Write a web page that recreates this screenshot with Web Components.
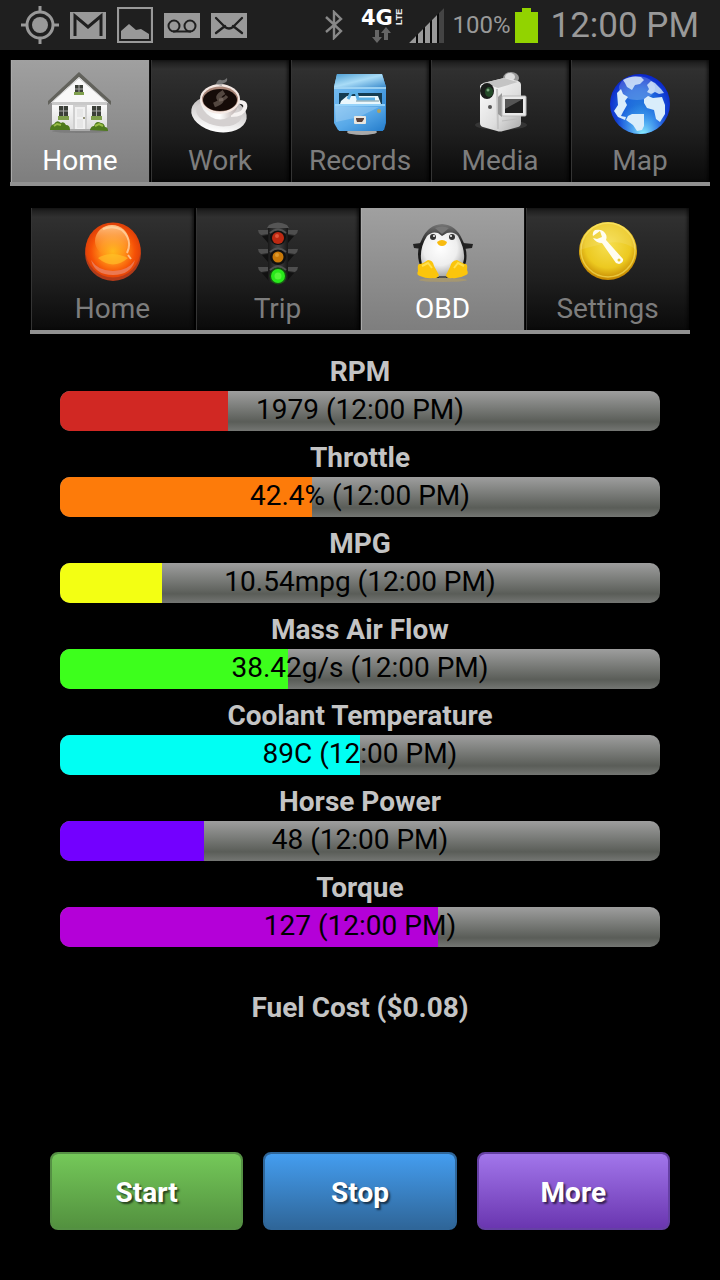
<!DOCTYPE html>
<html lang="en">
<head>
<meta charset="utf-8">
<meta name="viewport" content="width=device-width, initial-scale=1">
<title>OBD Dashboard</title>
<style>
  html, body { margin: 0; background: #000; }
  body { font-family: Roboto, "Noto Sans", sans-serif; font-size: 28px; color: #c4c4c4; }
</style>
</head>
<body>
<dash-app></dash-app>

<template id="t-app">
  <style>
    :host { display: flex; flex-direction: column; min-height: 100vh; }
    main { flex: 1; display: flex; flex-direction: column; padding: 10px 10px 50px; }
    .sub { margin: 22px 20px 0; }
    .gauges { display: flex; flex-direction: column; margin: 18px 50px 0; }
    .cost { margin: 34px 0 0; line-height: 40px; text-align: center; font-weight: 700; }
    .actions { display: flex; gap: 20px; margin: auto 40px 0; padding-top: 40px; }
  </style>
  <status-bar></status-bar>
  <main>
    <tab-strip label="Sections">
      <tab-item icon="house" selected>Home</tab-item>
      <tab-item icon="coffee">Work</tab-item>
      <tab-item icon="cabinet">Records</tab-item>
      <tab-item icon="camera">Media</tab-item>
      <tab-item icon="globe">Map</tab-item>
    </tab-strip>
    <tab-strip class="sub" label="Vehicle">
      <tab-item icon="orb">Home</tab-item>
      <tab-item icon="lights">Trip</tab-item>
      <tab-item icon="penguin" selected>OBD</tab-item>
      <tab-item icon="wrench">Settings</tab-item>
    </tab-strip>
    <section class="gauges">
      <gauge-bar label="RPM" percent="28" color="#d12823">1979 (12:00 PM)</gauge-bar>
      <gauge-bar label="Throttle" percent="42" color="#fd7b0a">42.4% (12:00 PM)</gauge-bar>
      <gauge-bar label="MPG" percent="17" color="#f3ff13">10.54mpg (12:00 PM)</gauge-bar>
      <gauge-bar label="Mass Air Flow" percent="38" color="#3dff1c">38.42g/s (12:00 PM)</gauge-bar>
      <gauge-bar label="Coolant Temperature" percent="50" color="#00fff3">89C (12:00 PM)</gauge-bar>
      <gauge-bar label="Horse Power" percent="24" color="#7300ff">48 (12:00 PM)</gauge-bar>
      <gauge-bar label="Torque" percent="63" color="#b400d8">127 (12:00 PM)</gauge-bar>
    </section>
    <p class="cost">Fuel Cost ($0.08)</p>
    <div class="actions">
      <action-button tone="green">Start</action-button>
      <action-button tone="blue">Stop</action-button>
      <action-button tone="purple">More</action-button>
    </div>
  </main>
</template>

<template id="t-status">
  <style>
    :host { display: flex; align-items: center; height: 50px; padding: 0 21px; background: #1f1f1f; color: #999; }
    .notes { display: flex; align-items: center; gap: 11px; }
    .system { display: flex; align-items: center; margin-left: auto; }
    svg { display: block; flex: none; }
    .net { margin: 0 6px 0 16px; }
    .pct { font-size: 24px; margin: 0 4px 0 8px; }
    .clock { font-size: 35px; margin-left: 13px; }
  </style>
  <div class="notes">
    <svg width="38" height="38" viewBox="0 0 38 38" fill="none" stroke="#999"><circle cx="19" cy="19" r="13" stroke-width="3"/><circle cx="19" cy="19" r="8" fill="#999" stroke="none"/><path d="M19 0v6M19 32v6M0 19h6M32 19h6" stroke-width="3"/></svg>
    <svg width="36" height="27" viewBox="0 0 36 27"><path fill="#999" d="M0 0h36v27H0z"/><path d="M5 24V4l13 11L31 4v20" fill="none" stroke="#1f1f1f" stroke-width="3"/></svg>
    <svg width="36" height="36" viewBox="0 0 36 36"><path d="M1 1h34v34H1z" fill="none" stroke="#999" stroke-width="2.2"/><path d="M4 32V24l8-7 7 6 5-1 8 5v5z" fill="#999"/></svg>
    <svg width="36" height="25" viewBox="0 0 36 25"><path fill="#999" d="M0 0h36v25H0z"/><g fill="none" stroke="#1f1f1f" stroke-width="2"><circle cx="10" cy="13" r="5.5"/><circle cx="26" cy="13" r="5.5"/><path d="M9 18.5h18"/></g></svg>
    <svg width="36" height="25" viewBox="0 0 36 25"><path fill="#999" d="M0 0h36v25H0z"/><path d="M5 5l9 9q4 3 8 0l9-9M5 20l9-7M31 20l-9-7" fill="none" stroke="#1f1f1f" stroke-width="2.3" stroke-linecap="round"/></svg>
  </div>
  <div class="system">
    <svg width="18" height="30" viewBox="0 0 18 30"><path d="M1 7l15 14-7 7V2l7 7L1 22" fill="none" stroke="#888" stroke-width="2.4"/></svg>
    <svg class="net" width="44" height="36" viewBox="0 0 44 36">
      <text x="2" y="18" font-family="DejaVu Sans" font-weight="700" font-size="21" fill="#fff">4G</text>
      <text transform="translate(43 18) rotate(-90)" font-family="Liberation Sans" font-weight="700" font-size="9" fill="#eee">LTE</text>
      <path d="M16 23h4v7h3l-5 6-5-6h3zM25 33v-7h-3l5-6 5 6h-3v7z" fill="#666"/>
    </svg>
    <svg width="35" height="35" viewBox="0 0 35 35"><path d="M0 35L35 0v35z" fill="#0a0a0a"/><path d="M0 35l7-7v7zM9 26l5-5v14H9zM16 19l5-5v21h-5zM23 12l5-5v28h-5z" fill="#999"/><path d="M30 5l5-5v35h-5z" fill="#444"/></svg>
    <span class="pct">100%</span>
    <svg width="23" height="35" viewBox="0 0 23 35"><path d="M7 0h9v4h7v31H0V4h7z" fill="#92d300"/></svg>
    <time class="clock">12:00 PM</time>
  </div>
</template>

<template id="t-strip">
  <style>
    :host { display: block; }
    div { display: flex; border-bottom: 4px solid #919191; }
  </style>
  <div role="tablist"><slot></slot></div>
</template>

<template id="t-tab">
  <style>
    :host { display: flex; flex: 1; min-width: 0; }
    button {
      flex: 1; min-width: 0; height: 122px; padding: 11px 0 0; margin: 0; border: 0; border-radius: 0;
      display: flex; flex-direction: column; align-items: center; gap: 7px;
      font: inherit; line-height: 33px; color: #7d7d7d;
      background: linear-gradient(#191919, #303030 9px, #1e1e1e 60%, #0a0a0a);
      box-shadow: inset 1px 0 #000, inset 2px 0 #343434, inset -1px 0 #000, inset -3px 0 3px #0008;
    }
    button[aria-selected="true"] {
      color: #fff; background: linear-gradient(#a0a0a0, #7e7e7e);
      box-shadow: inset 1px 0 #222, inset 2px 0 #aaa, inset -1px 0 #111;
    }
  </style>
  <button type="button" role="tab"><tab-icon></tab-icon><span><slot></slot></span></button>
</template>

<template id="t-gauge">
  <style>
    :host { display: block; }
    .name { line-height: 40px; text-align: center; font-weight: 700; }
    .track {
      display: grid; height: 40px; margin: -1px 0 7px; border-radius: 10px; overflow: hidden;
      background: linear-gradient(#9e9e9e, #7b7d7a 40%, #5a5d58 77%, #747673);
    }
    .track > * { grid-area: 1 / 1; }
    .value { line-height: 37px; text-align: center; color: #000; }
  </style>
  <div class="name" id="name"></div>
  <div class="track" role="meter" aria-labelledby="name" aria-valuemin="0" aria-valuemax="100">
    <div class="fill"></div>
    <div class="value"><slot></slot></div>
  </div>
</template>

<template id="t-button">
  <style>
    :host { display: flex; flex: 1 1 0; min-width: 0; --top: #74c859; --bottom: #53913f; --edge: #559044; }
    :host([tone="blue"]) { --top: #449def; --bottom: #2f6699; --edge: #2f6699; }
    :host([tone="purple"]) { --top: #a276eb; --bottom: #6a36b0; --edge: #6540a4; }
    button {
      flex: 1; min-width: 0; height: 78px; padding: 4px 0 0; border: 2px solid var(--edge); border-radius: 8px;
      background: linear-gradient(var(--top), var(--bottom)) padding-box, var(--edge);
      font: inherit; font-weight: 700; line-height: 40px; color: #fff; text-shadow: 2px 2px 2px #0009;
    }
  </style>
  <button type="button"><slot></slot></button>
</template>

<script>
const ICONS = {
  house: `
    <defs><linearGradient id="w" x2="0" y2="1"><stop stop-color="#fff"/><stop offset="1" stop-color="#dcdcdc"/></linearGradient></defs>
    <ellipse cx="32" cy="60" rx="28" ry="2" fill="#6666"/>
    <path d="M4 30h55v28H4z" fill="url(#w)"/>
    <path d="M31 4l28 28H3z" fill="#f8f8f8"/>
    <path d="M4 31h55v3H4z" fill="#c9c9c9"/>
    <path d="M0 34v-4L31 1l32 29v4L31 6z" fill="#62625c"/>
    <path d="M3 32L31 7l29 25" fill="none" stroke="#ccc"/>
    <path d="M25 34h14v25H25z" fill="#d0d0d0"/><path d="M27 36h10v23H27z" fill="#f1f1f1"/>
    <path d="M29 38h6v8h-6zM29 48h6v9h-6z" fill="#e6e6e6"/><circle cx="36" cy="47" r="1" fill="#775"/>
    <g fill="#3c4039"><path d="M11 35h9v12h-9zM44 35h9v12h-9zM27 14h8v9h-8z"/></g>
    <path d="M15.500 35v12M11 40h9M48.500 35v12M44 40h9M31 14v9M27 18h8" stroke="#aaa"/>
    <path d="M10 45h11v4H10zM43 45h11v4H43zM26 21h10v3H26z" fill="#7f9f4d"/>
    <path d="M2 59q0-5 4-6 3-5 7-1 3-2 5 2 4 0 4 5zM42 59q1-4 4-4 2-6 7-3 3 0 4 4 3 0 3 4z" fill="#4e7a1c"/>
    <path d="M6 55l3-2 4 1M47 55l4-2 4 2" stroke="#98bd45" stroke-width="2" fill="none"/>
    <path d="M22 58h20v2H22z" fill="#aaa"/>`,
  coffee: `
    <defs><linearGradient id="s" x2="0" y2="1"><stop stop-color="#b5b0b0"/><stop offset="1" stop-color="#fff"/></linearGradient>
    <linearGradient id="c"><stop stop-color="#eee"/><stop offset=".5" stop-color="#fff"/><stop offset="1" stop-color="#b5a7a5"/></linearGradient></defs>
    <ellipse cx="31" cy="43" rx="28" ry="18" transform="rotate(10 31 43)" fill="url(#s)"/>
    <ellipse cx="31" cy="42" rx="23" ry="13" transform="rotate(10 31 42)" fill="#d4d0d0"/>
    <path d="M48 31q11-1 9 6-2 7-14 7" fill="none" stroke="#f6f2f1" stroke-width="4"/>
    <path d="M12 28q1 12 11 18 9 5 18 0 10-6 10-18z" fill="url(#c)"/>
    <ellipse cx="32" cy="28" rx="20" ry="15" fill="#f5e9e4"/><ellipse cx="32" cy="28" rx="18" ry="12.500" fill="#a98678"/>
    <ellipse cx="32" cy="29" rx="17" ry="11" fill="#150b08"/>
    <path d="M36 21q-8 5-4 7t-6 6" stroke="#8a7b7288" stroke-width="5" fill="none"/><path d="M39 25q-3 4-8 4" stroke="#8a7b7288" stroke-width="3" fill="none"/>
    <path d="M28 13q2-5 5-4t6-2q1 4-3 5t-1 4z" fill="#999a"/>`,
  cabinet: `
    <defs><linearGradient id="b" x2="1" y2="1"><stop stop-color="#7cc0f2"/><stop offset=".5" stop-color="#57a8e8"/><stop offset="1" stop-color="#247ccb"/></linearGradient>
    <linearGradient id="t" x2="1" y2="1"><stop stop-color="#4c9ed4"/><stop offset=".5" stop-color="#a9dcf7"/><stop offset="1" stop-color="#3c8ccd"/></linearGradient></defs>
    <ellipse cx="34" cy="61" rx="15" ry="3" fill="#aaa"/>
    <path d="M6 16l3-13h45l4 13v36l-2 7H10l-4-7z" fill="url(#b)"/>
    <path d="M6 16L9 3h45l4 13z" fill="url(#t)"/><path d="M6 17h52" stroke="#b0def6" stroke-width="1.500"/>
    <path d="M11 22h43v11H11z" fill="#153c52"/>
    <path d="M13 30l6-5h31l3 8H12z" fill="#eaf7fc"/><path d="M20 28l3-6 5-1 2 7h17" stroke="#5cb1e7" stroke-width="3" fill="none"/>
    <path d="M28 30h23" stroke="#77959f"/>
    <path d="M7 33h50v19l-2 8H11l-4-8z" fill="url(#b)"/><path d="M7 34h50" stroke="#a5dcfd" stroke-width="1.500"/>
    <path d="M7 35l44 1-20 10-23 5z" fill="#fff3"/>
    <rect x="26" y="45" width="12" height="8" rx="1" fill="#e9e6df"/><path d="M28 47h8v1l-2 3h-5l-1-3z" fill="#59403a"/>
    <circle cx="51" cy="40" r="2" fill="#b2a15a"/>`,
  camera: `
    <defs><linearGradient id="m" x2="1" y2="1"><stop stop-color="#fff"/><stop offset=".6" stop-color="#dedede"/><stop offset="1" stop-color="#aaa"/></linearGradient></defs>
    <ellipse cx="33" cy="54" rx="26" ry="5" fill="#5556"/>
    <ellipse cx="43" cy="7" rx="8" ry="6" fill="#999"/><ellipse cx="42" cy="6" rx="5" ry="4" fill="#ddd"/>
    <path d="M12 16q0-3 4-4l20-5 14 3q3 1 3 4v38q0 3-3 4l-15 4q-3 1-6 0l-14-4q-3-1-3-4z" fill="url(#m)"/>
    <path d="M15 12l21-5 14 4-20 6z" fill="#c4c4c4"/>
    <path d="M29 18l1 40" stroke="#c4c4c4" stroke-width="2"/>
    <ellipse cx="19" cy="20" rx="7" ry="8" fill="#191c1a"/><ellipse cx="21" cy="21" rx="4" ry="5" fill="#234a28"/><circle cx="20" cy="19" r="1.500" fill="#77a27b"/>
    <circle cx="22" cy="36" r="2" fill="#555"/><path d="M34 50l15-2" stroke="#bbb"/>
    <path d="M30 26l4-4v24l-4-3z" fill="#999"/>
    <rect x="34" y="25" width="24" height="20" rx="1" fill="#e9e9e9" stroke="#bbb"/><path d="M37 28h18v14H37z" fill="#202020"/><path d="M37 28h18L37 38z" fill="#555"/>`,
  globe: `
    <defs><radialGradient id="g" cx=".5" cy=".55" r=".55"><stop stop-color="#2379dc"/><stop offset=".55" stop-color="#1c64dd"/><stop offset="1" stop-color="#0a24ca"/></radialGradient>
    <radialGradient id="h" cx=".55" cy="1" r=".5"><stop stop-color="#8cf0ff"/><stop offset="1" stop-color="#49b8ff00"/></radialGradient></defs>
    <circle cx="32" cy="33" r="30" fill="url(#g)"/><circle cx="32" cy="33" r="30" fill="url(#h)"/>
    <g fill="#d9edfb"><path d="M15 9q8-5 18-3l3 3-4 4-5 1-3 5-5-3-2-4z" opacity=".8"/>
    <path d="M9 22l4-4 2 5 5 3-3 4 2 4-4 7-2 4 5 1-1 3-7-3-4-6 4-6z"/>
    <path d="M20 45l4-2h12v12l-2 4-5 1-4-6-7-5z"/>
    <path d="M39 14l4-4 4 2 6 6 3 4-5 1-4-2-4 2-4-2 2-3z" opacity=".8"/>
    <path d="M36 28l4-3 5 2 9-1 3 8v9l-5 8-4-3-2-9-7-2-3-5z"/></g>
    <ellipse cx="29" cy="17" rx="18" ry="12" fill="#fff3"/>`,
  orb: `
    <defs><radialGradient id="o" cx=".5" cy=".52" r=".5"><stop stop-color="#ffbd19"/><stop offset=".45" stop-color="#ff8b17"/><stop offset=".8" stop-color="#f55006"/><stop offset="1" stop-color="#e04208"/></radialGradient>
    <linearGradient id="p" x2="0" y2="1"><stop stop-color="#ffc589"/><stop offset="1" stop-color="#ff9e1600"/></linearGradient></defs>
    <circle cx="32" cy="34" r="28" fill="#b23b19"/><circle cx="32" cy="31" r="27.500" fill="url(#o)"/>
    <path d="M10 41q7 11 22 11t22-11q-4 15-22 15T10 41z" fill="#eb7952"/>
    <ellipse cx="31" cy="22" rx="17" ry="16" fill="url(#p)"/><path d="M17 39q13-8 30 0-15 13-30 0z" fill="#ffc52a99"/>
    <path d="M22 10q10-4 19 1M41 11q11 10 5 23M47 36l3 4" stroke="#ffd2a0cc" stroke-width="2" fill="none"/>`,
  lights: `
    <defs><linearGradient id="k"><stop stop-color="#191919"/><stop offset=".5" stop-color="#464646"/><stop offset="1" stop-color="#171717"/></linearGradient></defs>
    <path d="M22 8q10-7 20 0v54q-10 4-20 0z" fill="url(#k)"/><path d="M23 6q9-5 18 0l2 3H21z" fill="#555"/>
    <g fill="#4f4f4f"><path d="M12 11h10v4l-7 1q-3-2-3-5zM52 11H42v4l7 1q3-2 3-5zM12 30h10v4l-7 1q-3-2-3-5zM52 30H42v4l7 1q3-2 3-5zM12 48h10v4l-7 1q-3-2-3-5zM52 48H42v4l7 1q3-2 3-5z"/></g>
    <g fill="#111"><path d="M16 17l6-1v8zM48 17l-6-1v8zM16 36l6-1v8zM48 36l-6-1v8zM16 54l6-1v8zM48 54l-6-1v8z"/><circle cx="32" cy="18" r="8"/><circle cx="32" cy="38" r="8"/><circle cx="32" cy="56" r="8"/></g>
    <path d="M24 14q8-7 16 0M24 33q8-7 16 0M24 51q8-7 16 0" fill="none" stroke="#525252" stroke-width="2"/>
    <circle cx="32" cy="19" r="6" fill="#bd2912"/><circle cx="31" cy="17" r="2" fill="#e0553a"/>
    <circle cx="32" cy="38" r="5.500" fill="#c97909"/><circle cx="31" cy="36" r="2" fill="#e09a2a"/>
    <circle cx="32" cy="57" r="8.500" fill="#167b0d99"/><circle cx="32" cy="57" r="7" fill="#28e91b"/><circle cx="32" cy="57" r="3.500" fill="#55f53a"/>`,
  penguin: `
    <defs><radialGradient id="q" cx=".45" cy=".35" r=".65"><stop stop-color="#fff"/><stop offset=".6" stop-color="#eee"/><stop offset="1" stop-color="#a6a6a6"/></radialGradient>
    <linearGradient id="n" x2="0" y2="1"><stop stop-color="#777"/><stop offset=".35" stop-color="#202020"/><stop offset="1" stop-color="#111"/></linearGradient></defs>
    <ellipse cx="32" cy="61" rx="24" ry="2" fill="#bba25a88"/>
    <path d="M10 24l-8 1 1 4 8 1zM52 24l10 1-1 4-8 1z" fill="#222"/>
    <path d="M31 5Q17 6 11 20 5 31 8 43q4 16 23 16t24-16q2-12-4-23Q45 6 31 5z" fill="url(#n)"/>
    <path d="M16 17q5-5 11-3l4 3 5-3q7-2 11 3 7 13 6 23-3 18-22 18T10 40q-1-12 6-23z" fill="url(#q)"/>
    <path d="M24 9q7-3 14 0l-7 6z" fill="#777"/>
    <circle cx="22" cy="18" r="3" fill="#333"/><circle cx="41" cy="18" r="3" fill="#333"/><circle cx="23" cy="17" r="1" fill="#fff"/><circle cx="40" cy="17" r="1" fill="#fff"/>
    <path d="M26 23q5-4 10 0-1 4-5 4t-5-4z" fill="#f8bb10"/>
    <path d="M17 41q5 0 6 6l5 9q-2 4-6 3-6 1-13-2-4-1-2-5-1-8 2-7 4-1 8-4zM46 41q-6 1-7 7l-4 8q1 4 6 3 7 1 14-3 3-1 1-5 1-7-2-6-3-1-8-4z" fill="#fbc50c"/>
    <path d="M11 47l6-3 4 5M53 47l-6-3-4 5" stroke="#ffe04e" stroke-width="2" fill="none"/>
    <path d="M28 58h7" stroke="#555" stroke-width="2"/>`,
  wrench: `
    <defs><radialGradient id="y" cx=".5" cy=".4" r=".6"><stop stop-color="#f6df50"/><stop offset=".65" stop-color="#ecc920"/><stop offset="1" stop-color="#c48500"/></radialGradient></defs>
    <circle cx="32" cy="32" r="29" fill="url(#y)"/>
    <circle cx="32" cy="31" r="27" fill="none" stroke="#ffef6c88" stroke-width="1.500"/>
    <path d="M17 17q-1-4 2-6 5-1 8 1 5 4 3 9l17 19q1 3-4 5l-3-1-14-20q-6 0-9-5l4 1 5-2-2-6z" fill="#fffdef"/>
    <circle cx="43" cy="41" r="1.500" fill="#e7ca35"/>
    <path d="M4 31a28 28 0 0 1 56 0q-12-10-28-7T4 31z" fill="#ffffff1c"/>`
};

const stamp = (host, id) => {
  const root = host.attachShadow({ mode: "open" });
  root.append(document.getElementById(id).content.cloneNode(true));
  return root;
};

customElements.define("tab-icon", class extends HTMLElement {
  static observedAttributes = ["name"];
  constructor() { super(); this.attachShadow({ mode: "open" }); }
  attributeChangedCallback(attr, old, name) {
    this.shadowRoot.innerHTML = `<style>:host{display:block;width:64px;height:66px}svg{display:block}</style>
      <svg width="64" height="66" viewBox="0 0 64 66" aria-hidden="true">${ICONS[name] || ""}</svg>`;
  }
});

customElements.define("tab-item", class extends HTMLElement {
  connectedCallback() {
    if (this.shadowRoot) return;
    const root = stamp(this, "t-tab");
    root.querySelector("tab-icon").setAttribute("name", this.getAttribute("icon"));
    this.sync();
    root.querySelector("button").addEventListener("click", () => {
      for (const tab of this.parentElement.children) {
        tab.toggleAttribute("selected", tab === this);
        tab.sync();
      }
    });
  }
  sync() {
    this.shadowRoot.querySelector("button").setAttribute("aria-selected", this.hasAttribute("selected"));
  }
});

customElements.define("tab-strip", class extends HTMLElement {
  connectedCallback() {
    if (this.shadowRoot) return;
    stamp(this, "t-strip").querySelector("div").setAttribute("aria-label", this.getAttribute("label"));
  }
});

customElements.define("gauge-bar", class extends HTMLElement {
  connectedCallback() {
    if (this.shadowRoot) return;
    const root = stamp(this, "t-gauge");
    const percent = this.getAttribute("percent");
    root.querySelector(".name").textContent = this.getAttribute("label");
    root.querySelector(".track").setAttribute("aria-valuenow", percent);
    const fill = root.querySelector(".fill");
    fill.style.width = percent + "%";
    fill.style.background = this.getAttribute("color");
  }
});

for (const [tag, id] of [["action-button", "t-button"], ["status-bar", "t-status"], ["dash-app", "t-app"]]) {
  customElements.define(tag, class extends HTMLElement {
    connectedCallback() { if (!this.shadowRoot) stamp(this, id); }
  });
}
</script>
</body>
</html>
